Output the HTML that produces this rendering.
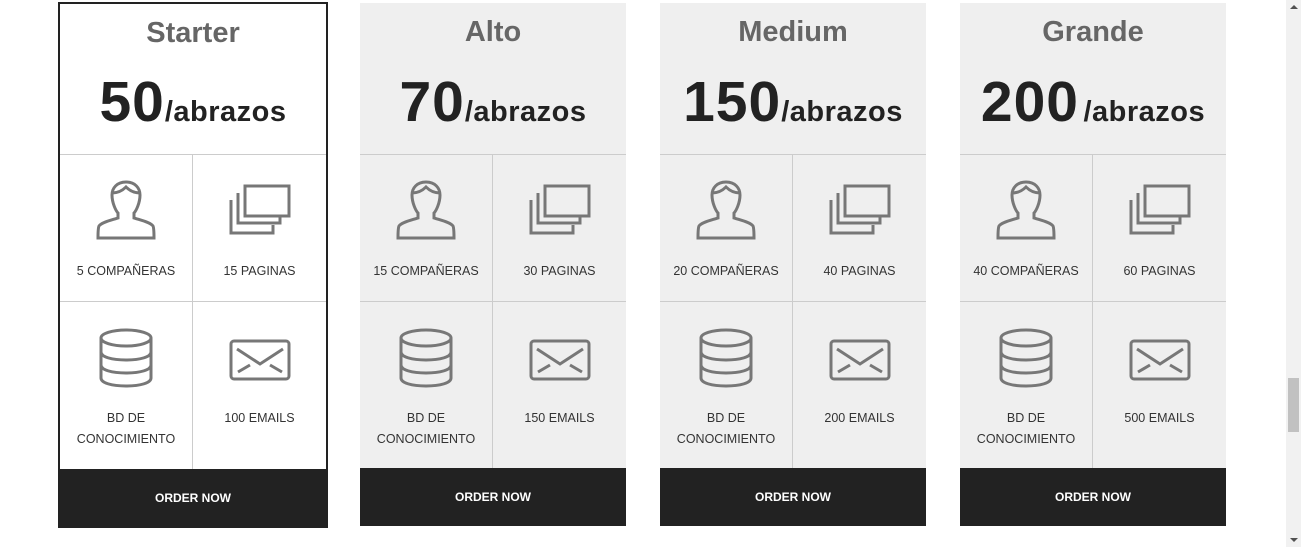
<!DOCTYPE html>
<html><head><meta charset="utf-8"><style>
*{margin:0;padding:0;box-sizing:border-box}
body{width:1301px;height:547px;background:#fff;font-family:"Liberation Sans",sans-serif;position:relative;overflow:hidden}
.card{position:absolute;top:3px;width:266px;height:523px;background:#efefef}
.card.first{left:58px;top:2px;width:270px;height:526px;background:#fff;border:2px solid #222}
.title{position:absolute;top:13px;left:0;right:0;text-align:center;font-size:29px;font-weight:bold;color:#666}
.price{position:absolute;top:66px;left:0;right:0;text-align:center;color:#222;font-weight:bold;white-space:nowrap}
.first .price{top:65px}
.price b{font-size:57px;letter-spacing:1px}
.price span{font-size:29px;letter-spacing:.5px}
.grid{position:absolute;top:151px;left:0;right:0;height:315px;border-top:1px solid #ccc}
.first .grid{top:150px}
.cell{position:absolute;text-align:center;font-size:12.5px;color:#333;line-height:21px}
.c1{left:0;width:132px}.c2{left:132px;right:0;border-left:1px solid #ccc}
.r1{top:0;height:147px;border-bottom:1px solid #ccc}.r2{top:147px;height:168px}
.cell svg{position:absolute;left:50%;transform:translateX(-50%)}
.cell .lab{position:absolute;left:0;right:0}
.r1 .lab{top:106px}.r2 .lab{top:106px}
.btn{position:absolute;left:0;right:0;bottom:0;height:58px;background:#222;color:#fff;font-weight:bold;font-size:12px;text-align:center;line-height:58px}
.first .btn{left:-2px;right:-2px;bottom:-2px;height:59px}
.sb{position:absolute;right:0;top:0;width:15px;height:547px;background:#f1f1f1}
.thumb{position:absolute;left:2px;top:378px;width:11px;height:54px;background:#c1c1c1}
</style></head><body>

<div class="card first">
<div class="title">Starter</div>
<div class="price"><b>50</b><span>/abrazos</span></div>
<div class="grid">
 <div class="cell c1 r1"><svg style="top:24px" width="60" height="62" viewBox="0 0 60 62" fill="none" stroke="#777" stroke-width="3"><path d="M30 3c-9 0-14 6-14 13 0 8 4 16 6 18v5c-6 2-16 4-19 8-1 2-1 6-1 12h56c0-6 0-10-1-12-3-4-13-6-19-8v-5c2-2 6-10 6-18 0-7-5-13-14-13z"/><path d="M16 14c5 0 10-2 14-6 4 4 9 6 14 6"/></svg><div class="lab">5 COMPAÑERAS</div></div>
 <div class="cell c2 r1"><svg style="top:28px" width="64" height="54" viewBox="0 0 64 54" fill="none" stroke="#777" stroke-width="3"><rect x="17" y="3" width="44" height="30"/><path d="M10 10v30h42v-6"/><path d="M3 17v33h42v-8"/></svg><div class="lab">15 PAGINAS</div></div>
 <div class="cell c1 r2"><svg style="top:26px" width="56" height="60" viewBox="0 0 56 60" fill="none" stroke="#777" stroke-width="3"><ellipse cx="28" cy="10" rx="25" ry="8"/><path d="M3 10v40c0 5 11 8 25 8s25-3 25-8V10"/><path d="M3 24c0 5 11 8 25 8s25-3 25-8M3 37c0 5 11 8 25 8s25-3 25-8"/></svg><div class="lab">BD DE<br>CONOCIMIENTO</div></div>
 <div class="cell c2 r2"><svg style="top:37px" width="62" height="42" viewBox="0 0 62 42" fill="none" stroke="#777" stroke-width="3"><rect x="2" y="2" width="58" height="38" rx="3"/><path d="M8 10l23 15 23-15M9 33l12-7M53 33l-12-7"/></svg><div class="lab">100 EMAILS</div></div>
</div>
<div class="btn">ORDER NOW</div>
</div>

<div class="card" style="left:360px">
<div class="title">Alto</div>
<div class="price"><b>70</b><span>/abrazos</span></div>
<div class="grid">
 <div class="cell c1 r1"><svg style="top:24px" width="60" height="62" viewBox="0 0 60 62" fill="none" stroke="#777" stroke-width="3"><path d="M30 3c-9 0-14 6-14 13 0 8 4 16 6 18v5c-6 2-16 4-19 8-1 2-1 6-1 12h56c0-6 0-10-1-12-3-4-13-6-19-8v-5c2-2 6-10 6-18 0-7-5-13-14-13z"/><path d="M16 14c5 0 10-2 14-6 4 4 9 6 14 6"/></svg><div class="lab">15 COMPAÑERAS</div></div>
 <div class="cell c2 r1"><svg style="top:28px" width="64" height="54" viewBox="0 0 64 54" fill="none" stroke="#777" stroke-width="3"><rect x="17" y="3" width="44" height="30"/><path d="M10 10v30h42v-6"/><path d="M3 17v33h42v-8"/></svg><div class="lab">30 PAGINAS</div></div>
 <div class="cell c1 r2"><svg style="top:26px" width="56" height="60" viewBox="0 0 56 60" fill="none" stroke="#777" stroke-width="3"><ellipse cx="28" cy="10" rx="25" ry="8"/><path d="M3 10v40c0 5 11 8 25 8s25-3 25-8V10"/><path d="M3 24c0 5 11 8 25 8s25-3 25-8M3 37c0 5 11 8 25 8s25-3 25-8"/></svg><div class="lab">BD DE<br>CONOCIMIENTO</div></div>
 <div class="cell c2 r2"><svg style="top:37px" width="62" height="42" viewBox="0 0 62 42" fill="none" stroke="#777" stroke-width="3"><rect x="2" y="2" width="58" height="38" rx="3"/><path d="M8 10l23 15 23-15M9 33l12-7M53 33l-12-7"/></svg><div class="lab">150 EMAILS</div></div>
</div>
<div class="btn">ORDER NOW</div>
</div>

<div class="card" style="left:660px">
<div class="title">Medium</div>
<div class="price"><b>150</b><span>/abrazos</span></div>
<div class="grid">
 <div class="cell c1 r1"><svg style="top:24px" width="60" height="62" viewBox="0 0 60 62" fill="none" stroke="#777" stroke-width="3"><path d="M30 3c-9 0-14 6-14 13 0 8 4 16 6 18v5c-6 2-16 4-19 8-1 2-1 6-1 12h56c0-6 0-10-1-12-3-4-13-6-19-8v-5c2-2 6-10 6-18 0-7-5-13-14-13z"/><path d="M16 14c5 0 10-2 14-6 4 4 9 6 14 6"/></svg><div class="lab">20 COMPAÑERAS</div></div>
 <div class="cell c2 r1"><svg style="top:28px" width="64" height="54" viewBox="0 0 64 54" fill="none" stroke="#777" stroke-width="3"><rect x="17" y="3" width="44" height="30"/><path d="M10 10v30h42v-6"/><path d="M3 17v33h42v-8"/></svg><div class="lab">40 PAGINAS</div></div>
 <div class="cell c1 r2"><svg style="top:26px" width="56" height="60" viewBox="0 0 56 60" fill="none" stroke="#777" stroke-width="3"><ellipse cx="28" cy="10" rx="25" ry="8"/><path d="M3 10v40c0 5 11 8 25 8s25-3 25-8V10"/><path d="M3 24c0 5 11 8 25 8s25-3 25-8M3 37c0 5 11 8 25 8s25-3 25-8"/></svg><div class="lab">BD DE<br>CONOCIMIENTO</div></div>
 <div class="cell c2 r2"><svg style="top:37px" width="62" height="42" viewBox="0 0 62 42" fill="none" stroke="#777" stroke-width="3"><rect x="2" y="2" width="58" height="38" rx="3"/><path d="M8 10l23 15 23-15M9 33l12-7M53 33l-12-7"/></svg><div class="lab">200 EMAILS</div></div>
</div>
<div class="btn">ORDER NOW</div>
</div>

<div class="card" style="left:960px">
<div class="title">Grande</div>
<div class="price"><b>200</b> <span>/abrazos</span></div>
<div class="grid">
 <div class="cell c1 r1"><svg style="top:24px" width="60" height="62" viewBox="0 0 60 62" fill="none" stroke="#777" stroke-width="3"><path d="M30 3c-9 0-14 6-14 13 0 8 4 16 6 18v5c-6 2-16 4-19 8-1 2-1 6-1 12h56c0-6 0-10-1-12-3-4-13-6-19-8v-5c2-2 6-10 6-18 0-7-5-13-14-13z"/><path d="M16 14c5 0 10-2 14-6 4 4 9 6 14 6"/></svg><div class="lab">40 COMPAÑERAS</div></div>
 <div class="cell c2 r1"><svg style="top:28px" width="64" height="54" viewBox="0 0 64 54" fill="none" stroke="#777" stroke-width="3"><rect x="17" y="3" width="44" height="30"/><path d="M10 10v30h42v-6"/><path d="M3 17v33h42v-8"/></svg><div class="lab">60 PAGINAS</div></div>
 <div class="cell c1 r2"><svg style="top:26px" width="56" height="60" viewBox="0 0 56 60" fill="none" stroke="#777" stroke-width="3"><ellipse cx="28" cy="10" rx="25" ry="8"/><path d="M3 10v40c0 5 11 8 25 8s25-3 25-8V10"/><path d="M3 24c0 5 11 8 25 8s25-3 25-8M3 37c0 5 11 8 25 8s25-3 25-8"/></svg><div class="lab">BD DE<br>CONOCIMIENTO</div></div>
 <div class="cell c2 r2"><svg style="top:37px" width="62" height="42" viewBox="0 0 62 42" fill="none" stroke="#777" stroke-width="3"><rect x="2" y="2" width="58" height="38" rx="3"/><path d="M8 10l23 15 23-15M9 33l12-7M53 33l-12-7"/></svg><div class="lab">500 EMAILS</div></div>
</div>
<div class="btn">ORDER NOW</div>
</div>

<div class="sb"><div style="position:absolute;left:4px;top:5px;border:4px solid transparent;border-bottom:4px solid #505050;border-top:0"></div><div class="thumb"></div><div style="position:absolute;left:4px;bottom:5px;border:4px solid transparent;border-top:4px solid #505050;border-bottom:0"></div></div>
</body></html>
